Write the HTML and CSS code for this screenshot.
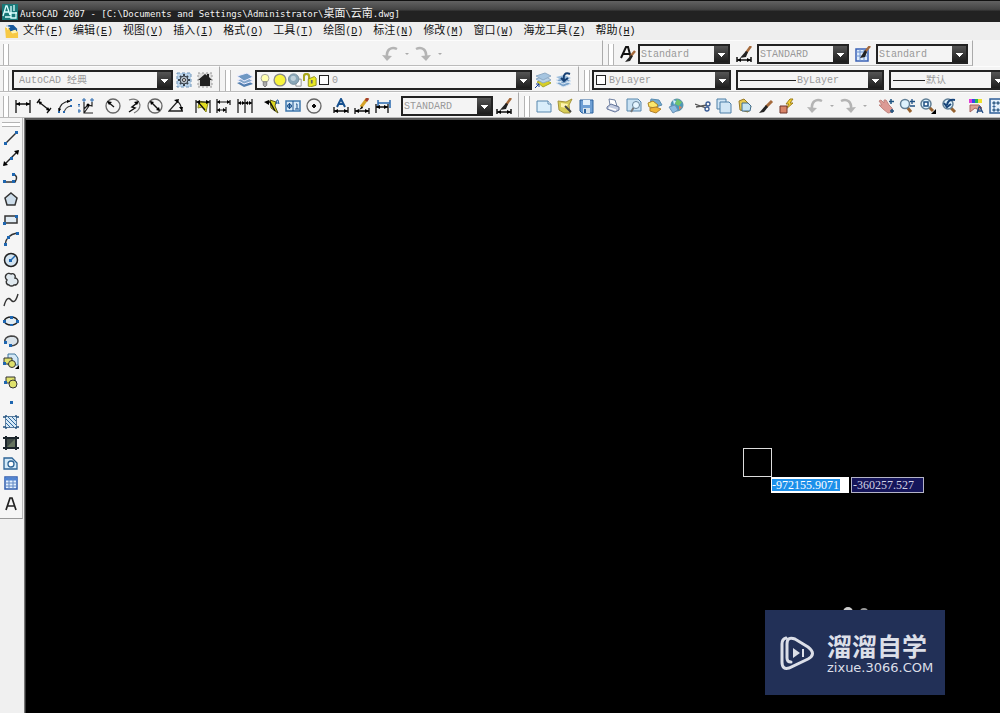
FILE: index.html
```html
<!DOCTYPE html>
<html lang="zh-CN">
<head>
    <meta charset="UTF-8">
    <meta name="viewport" content="width=device-width, initial-scale=1.0">
    <title>AutoCAD 2007</title>
    <link rel="stylesheet" href="styles.css">
</head>
<body>

    <header class="titlebar">
        <svg class="app-icon" viewBox="0 0 16 16"><rect width="16" height="16" fill="#187878"/><path d="M1 12L4 2h1l3 9M2 8h5M9 2v9M12 1v6M8 9h7M9 9v5h5V8M3 13h6" fill="none" stroke="#dff" stroke-width="1.3"/></svg>
        <span>AutoCAD 2007 - [C:\Documents and Settings\Administrator\<b>桌面</b>\<b>云南</b>.dwg]</span>
    </header>

    <nav class="menubar">
        <svg class="doc-icon" viewBox="0 0 16 16"><path d="M3 1h7l4 4v7H3z" fill="#17589c"/><path d="M1 3l4 1 2 4 5-2 3 3v6H2z" fill="#f7c944"/><path d="M7 8l5-2 2 3-5 1z" fill="#fff3b0"/><path d="M4 1v5M1.500 3.500h5" stroke="#fff"/></svg>
        <button>文件<span>(<u>F</u>)</span></button>
        <button>编辑<span>(<u>E</u>)</span></button>
        <button>视图<span>(<u>V</u>)</span></button>
        <button>插入<span>(<u>I</u>)</span></button>
        <button>格式<span>(<u>O</u>)</span></button>
        <button>工具<span>(<u>T</u>)</span></button>
        <button>绘图<span>(<u>D</u>)</span></button>
        <button>标注<span>(<u>N</u>)</span></button>
        <button>修改<span>(<u>M</u>)</span></button>
        <button>窗口<span>(<u>W</u>)</span></button>
        <button>海龙工具<span>(<u>Z</u>)</span></button>
        <button>帮助<span>(<u>H</u>)</span></button>
    </nav>

    <!-- undo / styles -->
    <div class="row row-styles">
        <div class="toolbar undo-bar">
            <i class="grip"></i>
            <button class="tool wide push" aria-label="放弃"><svg viewBox="0 0 16 16"><path d="M15 3C9 0 4 4 5 11" fill="none" stroke="#b4b4b4" stroke-width="2.500"/><path d="M0 9l10 1-5 5z" fill="#b4b4b4"/></svg></button>
            <button class="more" aria-label="放弃列表"></button>
            <button class="tool wide" aria-label="重做"><svg viewBox="0 0 16 16"><path d="M1 3c6-3 11 1 10 8" fill="none" stroke="#b4b4b4" stroke-width="2.500"/><path d="M16 9L6 10l5 5z" fill="#b4b4b4"/></svg></button>
            <button class="more" aria-label="重做列表"></button>
        </div>
        <div class="toolbar">
            <i class="grip"></i>
            <button class="tool" aria-label="文字样式"><svg viewBox="0 0 16 16"><path d="M1 12L6 1h2l3 11M3 8h7" fill="none" stroke="#111" stroke-width="2"/><path d="M15 5l-5 6" stroke="#a56a3c" stroke-width="2.500"/><path d="M11 9l2 1-3 5-5 1z" fill="#222"/></svg></button>
            <label class="combo small"><select aria-label="文字样式"><option>Standard</option></select></label>
            <button class="tool style" aria-label="标注样式"><svg viewBox="0 0 16 16"><path d="M15 0l-5 7" stroke="#a56a3c" stroke-width="2.500"/><path d="M10 5l2 1-2 5-6 1z" fill="#222"/><path d="M1 11v5M15 11v5M1 14h14" stroke="#111" stroke-width="1.500"/><path d="M1 14l4-2v4zM15 14l-4-2v4z"/></svg></button>
            <label class="combo small"><select aria-label="标注样式"><option>STANDARD</option></select></label>
            <button class="tool style" aria-label="表格样式"><svg viewBox="0 0 16 16"><path d="M1 3h12v12H1z" fill="#dcebfa" stroke="#3b62b5" stroke-width="1.500"/><path d="M1 6h12M1 10h12M5 3v12M9 3v12" stroke="#6c92d2"/><path d="M15 0l-5 6" stroke="#a56a3c" stroke-width="2.500"/><path d="M10 4l2 2-2 5-5 1z" fill="#222"/></svg></button>
            <label class="combo small"><select aria-label="表格样式"><option>Standard</option></select></label>
        </div>
    </div>

    <!-- workspace / layers / properties -->
    <div class="row">
        <div class="toolbar">
            <i class="grip"></i>
            <label class="combo workspace"><select aria-label="工作空间"><option>AutoCAD 经典</option></select></label>
            <button class="tool" aria-label="工作空间设置"><svg viewBox="0 0 16 16"><rect x="1" y="1" width="14" height="14" fill="#bcd4ea" stroke="#6f94b8" stroke-dasharray="3 2"/><path d="M8 2v12M2 8h12M4 4l8 8M12 4l-8 8" stroke="#3a444e" stroke-width="2"/><circle cx="8" cy="8" r="4" fill="#b4bec8" stroke="#3a444e"/><circle cx="8" cy="8" r="1.500" fill="#fff" stroke="#333"/></svg></button>
            <button class="tool" aria-label="我的工作空间"><svg viewBox="0 0 16 16"><rect x="1" y="1" width="14" height="14" fill="#ddd" stroke="#999" stroke-dasharray="2 2"/><path d="M1 8l7-6 2 1.500V2h2v3l3 3h-2v6H3V8z" fill="#222"/></svg></button>
        </div>
        <div class="toolbar">
            <i class="grip"></i>
            <button class="tool" aria-label="图层特性管理器"><svg viewBox="0 0 16 16"><path d="M0 11l10-3 6 4-9 3z" fill="#537fb0"/><path d="M0 8l10-3 6 4-9 3z" fill="#86a9cd" stroke="#eef"/><path d="M0 4l10-3 6 4-9 4z" fill="#6f98c3" stroke="#eef"/></svg></button>
            <label class="combo layer">
                <svg viewBox="0 0 16 16"><circle cx="8" cy="6" r="4.500" fill="#ffffb0" stroke="#999"/><path d="M6 10h4v4l-2 2-2-2z" fill="#aaa" stroke="#777"/></svg>
                <svg viewBox="0 0 16 16"><circle cx="8" cy="8" r="7.500" fill="#888"/><circle cx="8" cy="8" r="6" fill="#f8f43c"/></svg>
                <svg viewBox="0 0 16 16"><path d="M9 7h6v8H9z" fill="#fff" stroke="#888"/><circle cx="6.500" cy="7" r="6" fill="#8aa7b8" stroke="#6e8797"/><circle cx="6" cy="6" r="3" fill="#bfd0da"/></svg>
                <svg viewBox="0 0 16 16"><path d="M1 9V4q0-3 3-3t3 3v3" fill="none" stroke="#a8a71c" stroke-width="2.500"/><path d="M6 7l7-3 2 2v8l-7 2-2-1z" fill="#e9e820" stroke="#88871a"/><path d="M10 8v4" stroke="#666" stroke-width="2"/></svg>
                <i class="swatch"></i>
                <select aria-label="图层"><option>0</option></select>
            </label>
            <button class="tool" aria-label="将对象的图层置为当前"><svg viewBox="0 0 16 16"><path d="M2 10l8-3 6 4-8 4z" fill="#d8cf25" stroke="#a5a532"/><path d="M1 7l9-3 6 4-8 3z" fill="#b8d2e8" stroke="#8fabc5"/><path d="M1 4l9-3 6 3-8 4z" fill="#a6c5e0" stroke="#8fabc5"/><path d="M0 16l4-4M1 12h3v3" fill="none" stroke="#123b91"/></svg></button>
            <button class="tool" aria-label="上一个图层"><svg viewBox="0 0 16 16"><path d="M0 11l9-3 6 4-8 3zM0 8l9-3 6 4-8 3z" fill="#79a2ca" stroke="#dce8f4"/><path d="M0 5l8-2 7 3-8 3z" fill="#9cbede"/><path d="M14 2C9 0 7 3 8 8M5 6l3 3 4-3" fill="none" stroke="#153f73" stroke-width="2"/></svg></button>
        </div>
        <div class="toolbar props">
            <i class="grip"></i>
            <label class="combo color"><i class="swatch"></i><select aria-label="颜色"><option>ByLayer</option></select></label>
            <label class="combo linetype"><i class="line"></i><select aria-label="线型"><option>ByLayer</option></select></label>
            <label class="combo lineweight"><i class="line short"></i><select aria-label="线宽"><option>默认</option></select></label>
        </div>
    </div>

    <!-- dimension / standard -->
    <div class="row">
        <div class="toolbar">
            <i class="grip"></i>
            <button class="tool" aria-label="线性"><svg viewBox="0 0 16 16"><path d="M1 2v13M15 2v13M1 6h14" stroke="#111" stroke-width="1.300"/><path d="M1 6l4-2v4zM15 6l-4-2v4z"/></svg></button>
            <button class="tool" aria-label="对齐"><svg viewBox="0 0 16 16"><path d="M4 1L1 5M15 10l-4 5M3 4l10 8" stroke="#111" stroke-width="1.300"/><path d="M2 3l4 1-2 3zM14 13l-4-1 2-3z"/></svg></button>
            <button class="tool" aria-label="弧长"><svg viewBox="0 0 16 16"><path d="M2 13Q3 4 13 3" fill="none" stroke="#222" stroke-width="1.200"/><path d="M7 15Q8 9 14 8" fill="none" stroke="#444" stroke-width="1.200"/><path d="M14 3l-4-1v3zM2 14L1 10l3 1z"/><path d="M6 13h2v2H6zM13 7h2v2h-2zM1 13h2v2H1zM13 1h2v2h-2z" fill="#2868ae"/></svg></button>
            <button class="tool" aria-label="坐标"><svg viewBox="0 0 16 16"><path d="M6 4v11h9M6 11l4-4 4 1V4M6 15l5-7" fill="none" stroke="#222" stroke-width="1.200"/><path d="M0 6l1 1 1-1M1 7v2M5 1h2v2H5zM13 1h2v2h-2zM0 12h2v2H0z" fill="none" stroke="#2868ae"/><circle cx="10" cy="7" r="1.500"/></svg></button>
            <i class="sep"></i>
            <button class="tool" aria-label="半径"><svg viewBox="0 0 16 16"><circle cx="8" cy="8" r="7" fill="none" stroke="#666" stroke-width="1.300"/><path d="M9 9L3 4" stroke="#111" stroke-width="1.300"/><path d="M2 3l5 1-3 3z"/></svg></button>
            <button class="tool" aria-label="折弯"><svg viewBox="0 0 16 16"><path d="M3 2q9-3 11 5 0 5-6 8" fill="none" stroke="#777" stroke-width="1.200"/><path d="M3 14l6-4-3-1 5-4" fill="none" stroke="#111" stroke-width="1.500"/><path d="M13 3L8 4l3 3z"/></svg></button>
            <button class="tool" aria-label="直径"><svg viewBox="0 0 16 16"><circle cx="8" cy="8" r="7" fill="none" stroke="#666" stroke-width="1.300"/><path d="M4 4l8 8" stroke="#111" stroke-width="1.500"/><path d="M3 3l4 1-3 3zM13 13l-4-1 3-3z"/></svg></button>
            <button class="tool" aria-label="角度"><svg viewBox="0 0 16 16"><path d="M10 3l-9 10h14M8 2q5 3 6 11" fill="none" stroke="#222" stroke-width="1.300"/><path d="M6 2l5-1-1 4zM14 13l-3-4h4z"/></svg></button>
            <i class="sep"></i>
            <button class="tool" aria-label="快速标注"><svg viewBox="0 0 16 16"><path d="M4 3l9 2-2 9-4-5-4 1z" fill="#e2dc20" stroke="#8a8920"/><path d="M1 2v13M15 2v13M1 4h14M3 4l7 8" stroke="#111" stroke-width="1.200"/><path d="M1 4l4-2v4zM15 4l-4-2v4z"/></svg></button>
            <button class="tool" aria-label="基线"><svg viewBox="0 0 16 16"><path d="M1 1v14M14 2v5M10 9v6M1 4h13M1 12h9" stroke="#111" stroke-width="1.200"/><path d="M1 4l3-2v4zM14 4l-3-2v4zM1 12l3-2v4zM10 12l-3-2v4z"/></svg></button>
            <button class="tool" aria-label="连续"><svg viewBox="0 0 16 16"><path d="M1 1v14M8 1v14M15 1v14M1 5h14" stroke="#111" stroke-width="1.200"/><path d="M1 5l3-2v4zM8 5L5 3v4zM8 5l3-2v4zM15 5l-3-2v4z"/></svg></button>
            <i class="sep"></i>
            <button class="tool" aria-label="快速引线"><svg viewBox="0 0 16 16"><path d="M6 2l6 2-1 4 3 7-7-5z" fill="#ded820" stroke="#59581d"/><path d="M3 4l3 0 5 9" fill="none" stroke="#111" stroke-width="1.500"/><path d="M0 4l5-2v5z"/><path d="M12 6l1-4h1l1 4M12 5h3" fill="none" stroke="#285f9b"/></svg></button>
            <button class="tool" aria-label="公差"><svg viewBox="0 0 16 16"><path d="M1 3h14v10H1z" fill="#d8e9f8" stroke="#3f78ad" stroke-width="1.500"/><path d="M8 3v10M2 8h5M4.500 5v6M11 6h1v5M10 11h4" fill="none" stroke="#1c538e"/><circle cx="4.500" cy="8" r="2" fill="none" stroke="#1c538e"/></svg></button>
            <button class="tool" aria-label="圆心标记"><svg viewBox="0 0 16 16"><circle cx="8" cy="8" r="7" fill="none" stroke="#666" stroke-width="1.300"/><path d="M8 6v4M6 8h4" stroke="#111" stroke-width="2"/></svg></button>
            <i class="sep"></i>
            <button class="tool" aria-label="编辑标注"><svg viewBox="0 0 16 16"><path d="M4 9l4-8 4 8M5 6h6" fill="none" stroke="#17518f" stroke-width="2"/><path d="M1 9v6M15 9v6M1 13h14" stroke="#111" stroke-width="1.300"/><path d="M1 13l4-2v4zM15 13l-4-2v4z"/></svg></button>
            <button class="tool" aria-label="编辑标注文字"><svg viewBox="0 0 16 16"><path d="M13 1L7 9" stroke="#d6a328" stroke-width="3"/><path d="M8 8l-3 4 4-2z"/><path d="M14 0l-2 3" stroke="#a53f2c" stroke-width="3"/><path d="M1 10v6M15 10v6M1 13h14" stroke="#111" stroke-width="1.300"/><path d="M1 13l4-2v4zM15 13l-4-2v4z"/></svg></button>
            <button class="tool" aria-label="标注更新"><svg viewBox="0 0 16 16"><path d="M3 2v8M15 2v8M3 5h12" stroke="#2868ae" stroke-width="1.500"/><path d="M1 6v9M13 6v9M1 9h12" stroke="#111" stroke-width="1.300"/><path d="M1 9l4-2v4zM13 9L9 7v4z"/></svg></button>
            <label class="combo small dim"><select aria-label="标注样式控制"><option>STANDARD</option></select></label>
            <button class="tool" aria-label="标注样式"><svg viewBox="0 0 16 16"><path d="M15 0l-5 7" stroke="#a56a3c" stroke-width="2.500"/><path d="M10 5l2 1-2 5-6 1z" fill="#222"/><path d="M1 11v5M15 11v5M1 14h14" stroke="#111" stroke-width="1.500"/><path d="M1 14l4-2v4zM15 14l-4-2v4z"/></svg></button>
        </div>
        <div class="toolbar standard">
            <i class="grip"></i>
            <button class="tool" aria-label="新建"><svg viewBox="0 0 16 16"><path d="M1 3h11l3 3v8H1z" fill="#d9eefb" stroke="#5686ad"/><path d="M12 3v3h3" fill="#fff" stroke="#5686ad"/></svg></button>
            <button class="tool" aria-label="打开"><svg viewBox="0 0 16 16"><path d="M1 3l8 1 6-3-3 6 1 8H7L2 12z" fill="#d7cd57" stroke="#a5953c"/><path d="M4 5l7 1-2 4-5-1z" fill="#fff5b0"/><path d="M8 8l6 6" stroke="#444" stroke-width="2"/></svg></button>
            <button class="tool" aria-label="保存"><svg viewBox="0 0 16 16"><path d="M2 2h13v13H4l-2-2z" fill="#6e9fd4" stroke="#2b619c"/><path d="M5 2h7v5H5z" fill="#e2f0fb"/><path d="M5 10h7v5H5z" fill="#d7e4ed"/><path d="M6 11h2v4H6z" fill="#2b619c"/></svg></button>
            <i class="sep"></i>
            <button class="tool" aria-label="打印"><svg viewBox="0 0 16 16"><path d="M4 1l6 1 2 6-7-1z" fill="#fff" stroke="#7182a1"/><path d="M2 9l4-3 8 3v3l-4 2-8-3z" fill="#c3cce0" stroke="#66769b"/><path d="M4 10l7 2" stroke="#fff" stroke-width="1.500"/></svg></button>
            <button class="tool" aria-label="打印预览"><svg viewBox="0 0 16 16"><path d="M1 1h11l3 3v9H1z" fill="#c9e2f3" stroke="#5686ad"/><path d="M8 9l-3 5" stroke="#777" stroke-width="2"/><circle cx="10" cy="7" r="3.500" fill="#e6f6ff" stroke="#65839b"/></svg></button>
            <button class="tool" aria-label="发布"><svg viewBox="0 0 16 16"><path d="M4 1l8 1 3 5-6 2-6-2z" fill="#74a9cf" stroke="#5a8cb0"/><path d="M1 5l5-2 5 4-2 3-7-1z" fill="#fbe76c" stroke="#ad8325"/><path d="M3 10l6-1 5 2-5 4-6-2z" fill="#f0b432" stroke="#b0812c"/></svg></button>
            <button class="tool" aria-label="三维 DWF"><svg viewBox="0 0 16 16"><circle cx="9" cy="7" r="6" fill="#4899bd" stroke="#5a8fa6"/><path d="M9 1l5 3-3 4-4-2z" fill="#72c46d"/><path d="M5 2l3 1-2 4z" fill="#d9f1f8"/><path d="M1 9l6-2 3 5-5 3z" fill="#8bbae0" stroke="#6a92b6"/><path d="M11 8l3 1-3 3z" fill="#e28157"/></svg></button>
            <i class="sep"></i>
            <button class="tool" aria-label="剪切"><svg viewBox="0 0 16 16"><path d="M0 6l11 4M1 9l11-2" stroke="#555" stroke-width="1.300"/><circle cx="13" cy="6" r="2" fill="none" stroke="#385b95" stroke-width="1.300"/><circle cx="12" cy="11" r="2" fill="none" stroke="#385b95" stroke-width="1.300"/></svg></button>
            <button class="tool" aria-label="复制"><svg viewBox="0 0 16 16"><path d="M1 1h9v10H1z" fill="#d1e6f5" stroke="#4d7fa7"/><path d="M4 4h9l2 2v9H4z" fill="#d1e6f5" stroke="#4d7fa7"/></svg></button>
            <button class="tool" aria-label="粘贴"><svg viewBox="0 0 16 16"><path d="M2 3l5-2 7 7-3 6-8-2z" fill="#e8ca50" stroke="#9a7a25"/><path d="M5 5h6l3 3-1 5H5z" fill="#c5e4f4" stroke="#416d8e"/></svg></button>
            <button class="tool" aria-label="特性匹配"><svg viewBox="0 0 16 16"><path d="M14 3l-6 6" stroke="#a56a3c" stroke-width="3"/><path d="M8 7l2 2-4 5-5 1z" fill="#222"/></svg></button>
            <button class="tool" aria-label="块编辑器"><svg viewBox="0 0 16 16"><path d="M11 1l-4 5h3L6 12l8-7h-3l3-4z" fill="#f9d431" stroke="#9b7c1a"/><path d="M1 8h7v7H1z" fill="#d88468" stroke="#71342a"/></svg></button>
            <i class="sep"></i>
            <button class="tool wide" aria-label="放弃"><svg viewBox="0 0 16 16"><path d="M15 3C9 0 4 4 5 11" fill="none" stroke="#b4b4b4" stroke-width="2.500"/><path d="M0 9l10 1-5 5z" fill="#b4b4b4"/></svg></button>
            <button class="more" aria-label="放弃列表"></button>
            <button class="tool wide" aria-label="重做"><svg viewBox="0 0 16 16"><path d="M1 3c6-3 11 1 10 8" fill="none" stroke="#b4b4b4" stroke-width="2.500"/><path d="M16 9L6 10l5 5z" fill="#b4b4b4"/></svg></button>
            <button class="more" aria-label="重做列表"></button>
            <i class="sep"></i>
            <button class="tool" aria-label="实时平移"><svg viewBox="0 0 16 16"><path d="M1 3l2-1 3 3V2l2 0 3 5 3 3 1 4-5 1-5-4-4-4 3 0z" fill="#dc9a94" stroke="#c08680"/><path d="M13 1v5M11 3.500h5M14 11v4M12 13h4" stroke="#1e5380" stroke-width="1.500"/></svg></button>
            <button class="tool" aria-label="实时缩放"><svg viewBox="0 0 16 16"><path d="M8 9l4 5" stroke="#966230" stroke-width="3"/><circle cx="6" cy="6" r="4.500" fill="#ddf2fd" stroke="#617f96" stroke-width="1.500"/><path d="M13 1v5M11 3.500h5M11 8h5" stroke="#1e4f83" stroke-width="1.300"/></svg></button>
            <button class="tool" aria-label="窗口缩放"><svg viewBox="0 0 16 16"><path d="M9 9l4 4" stroke="#966230" stroke-width="3"/><circle cx="6" cy="6" r="5" fill="#ddf2fd" stroke="#617f96" stroke-width="1.500"/><path d="M4 4h4v4H4z" fill="#fff" stroke="#1e4f83" stroke-width="1.500"/><path d="M16 11v5h-5z"/></svg></button>
            <button class="tool" aria-label="缩放上一个"><svg viewBox="0 0 16 16"><path d="M9 9l5 5" stroke="#966230" stroke-width="3"/><circle cx="7" cy="6" r="5" fill="#ddf2fd" stroke="#617f96" stroke-width="1.500"/><path d="M14 2Q7 1 6 7M3 5l3 4 4-3" fill="none" stroke="#164379" stroke-width="2"/></svg></button>
            <i class="sep"></i>
            <button class="tool" aria-label="特性"><svg viewBox="0 0 16 16"><path d="M1 1h3v4H1z" fill="#e339d7"/><path d="M4 1h3v4H4z" fill="#3849ec"/><path d="M7 1h3v4H7z" fill="#26bb55"/><path d="M10 1h4v4h-4z" fill="#eee12c"/><path d="M2 7h9l3 3-3 2-4-2-5 4z" fill="#dba092" stroke="#a8655e"/><path d="M9 15l2-6h1l3 6M10 13h4" fill="none" stroke="#244d83" stroke-width="1.300"/></svg></button>
            <button class="tool" aria-label="设计中心"><svg viewBox="0 0 16 16"><path d="M1 1h14v14H1z" fill="#e5f1fa" stroke="#315f98" stroke-width="1.500"/><path d="M4 4h2v2H4zM4 8h2v1H4zM4 11h2v2H4zM8 4h2v2H8zM8 11h2v2H8z" fill="#6f8b5c" stroke="#315f98"/></svg></button>
        </div>
    </div>

    <main class="workspace-area">
        <aside class="side">
            <div class="draw">
                <i class="grip-h"></i>
                <div class="group">
                    <button class="tool" aria-label="直线"><svg viewBox="0 0 16 16"><path d="M2 14L14 2" stroke="#333" stroke-width="1.500"/><path d="M1 12h3v3H1zM12 1h3v3h-3z" fill="#1e66b0"/></svg></button>
                    <button class="tool" aria-label="构造线"><svg viewBox="0 0 16 16"><path d="M1 15L15 1" stroke="#222" stroke-width="1.500"/><path d="M0 16l1-5 4 4zM16 0l-5 1 4 4z"/><path d="M7 7h3v3H7z" fill="#1e66b0"/></svg></button>
                    <button class="tool" aria-label="多段线"><svg viewBox="0 0 16 16"><path d="M2 12h10q4-6-2-8" fill="none" stroke="#333" stroke-width="1.500"/><path d="M0 10h3v3H0zM9 10h3v3H9zM9 3h3v3H9z" fill="#1e66b0"/></svg></button>
                </div>
                <div class="group">
                    <button class="tool" aria-label="正多边形"><svg viewBox="0 0 16 16"><path d="M8 2l6 5-2 7H4L2 7z" fill="#cdddea" stroke="#333" stroke-width="1.500"/></svg></button>
                    <button class="tool" aria-label="矩形"><svg viewBox="0 0 16 16"><path d="M2 5h12v7H2z" fill="#e0ebf3" stroke="#333" stroke-width="1.500"/><path d="M0 11h3v3H0zM12 4h3v3h-3z" fill="#1e66b0"/></svg></button>
                    <button class="tool" aria-label="圆弧"><svg viewBox="0 0 16 16"><path d="M2 14Q3 4 14 2" fill="none" stroke="#333" stroke-width="1.500"/><path d="M1 12h3v3H1zM4 5h3v3H4zM13 1h3v3h-3z" fill="#1e66b0"/></svg></button>
                </div>
                <div class="group">
                    <button class="tool" aria-label="圆"><svg viewBox="0 0 16 16"><circle cx="8" cy="8" r="6.500" fill="#d3e4f1" stroke="#222" stroke-width="1.500"/><path d="M8 8l4-4" stroke="#1e66b0" stroke-width="1.500"/><path d="M6 7h3v3H6z" fill="#1e66b0"/></svg></button>
                    <button class="tool" aria-label="修订云线"><svg viewBox="0 0 16 16"><path d="M4 8a3.500 3.500 0 1 1 4-6 3 3 0 0 1 4 4 3.500 3.500 0 1 1-1 7 3.500 3.500 0 0 1-5 0 3 3 0 0 1-2-5z" fill="#e0e9ef" stroke="#333" stroke-width="1.400"/></svg></button>
                    <button class="tool" aria-label="样条曲线"><svg viewBox="0 0 16 16"><path d="M1 14Q4 3 8 8t7-6" fill="none" stroke="#333" stroke-width="1.400"/></svg></button>
                </div>
                <div class="group">
                    <button class="tool" aria-label="椭圆"><svg viewBox="0 0 16 16"><ellipse cx="8" cy="8" rx="6.500" ry="4" fill="#e2edf4" stroke="#222" stroke-width="1.500"/><path d="M0 7h3v3H0zM13 7h3v3h-3zM7 3h3v3H7zM7 11h3v2H7z" fill="#1e66b0"/></svg></button>
                    <button class="tool" aria-label="椭圆弧"><svg viewBox="0 0 16 16"><path d="M2 9q-1-5 6-6 7 0 7 5 0 4-7 5" fill="#d9e3ea" stroke="#444" stroke-width="1.500"/><path d="M1 8h3v3H1zM6 11h3v3H6z" fill="#1e66b0"/></svg></button>
                    <button class="tool" aria-label="插入块"><svg viewBox="0 0 16 16"><path d="M5 1h7l3 4v7H5z" fill="#d3e8f6" stroke="#40779c"/><path d="M1 5h8v6H1z" fill="#dfe16c" stroke="#333"/><circle cx="9" cy="11" r="3.500" fill="#dfe16c" stroke="#333"/><path d="M16 12v4h-4z"/><path d="M0 9h3v3H0z" fill="#1e66b0"/></svg></button>
                </div>
                <div class="group">
                    <button class="tool" aria-label="创建块"><svg viewBox="0 0 16 16"><path d="M3 3h9v6H3z" fill="#dfe16c" stroke="#333"/><circle cx="10" cy="10" r="4" fill="#dfe16c" stroke="#333"/><path d="M1 7h3v3H1z" fill="#1e66b0"/></svg></button>
                    <button class="tool" aria-label="点"><svg viewBox="0 0 16 16"><path d="M7 7h3v3H7z" fill="#1e66b0"/></svg></button>
                    <button class="tool" aria-label="图案填充"><svg viewBox="0 0 16 16"><path d="M3 1v14M13 1v14M0 3h16M0 13h16" stroke="#22527f" stroke-width="1.400"/><path d="M3 3h10v10H3z" fill="#d7e8f5"/><path d="M3 9l4 4M3 5l8 8M5 3l8 8M9 3l4 4" stroke="#2b689e"/></svg></button>
                </div>
                <div class="group">
                    <button class="tool" aria-label="渐变色"><svg viewBox="0 0 16 16"><path d="M3 3h10v10H3z" fill="#66745f"/><path d="M3 3h10L3 13z" fill="#404b46"/><path d="M3 1v14M13 1v14M0 3h16M0 13h16" stroke="#1c252b" stroke-width="2"/></svg></button>
                    <button class="tool" aria-label="面域"><svg viewBox="0 0 16 16"><path d="M1 3h8l5 5v6H1z" fill="#d4eaf9" stroke="#2b6395" stroke-width="1.300"/><circle cx="8" cy="9" r="3" fill="#fff" stroke="#2b6395" stroke-width="1.300"/></svg></button>
                    <button class="tool" aria-label="表格"><svg viewBox="0 0 16 16"><path d="M2 2h12v12H2z" fill="#e5f1ff" stroke="#315cad" stroke-width="1.500"/><path d="M2 4h12" stroke="#4d83d5" stroke-width="3"/><path d="M2 8h12M2 11h12M6 3v11M10 3v11" stroke="#6088c4"/></svg></button>
                </div>
                <div class="group">
                    <button class="tool" aria-label="多行文字"><svg viewBox="0 0 16 16"><path d="M3 14L7 2h2l4 12M5 10h6" fill="none" stroke="#222" stroke-width="1.700"/></svg></button>
                </div>
            </div>
        </aside>

        <section class="canvas">
            <div class="pickbox"></div>
            <div class="coords">
                <input class="x" type="text" value="-972155.9071" aria-label="X">
                <input class="y" type="text" value="-360257.527" aria-label="Y">
            </div>
            <i class="bump big"></i>
            <i class="bump"></i>
            <div class="brand">
                <svg viewBox="0 0 34 36"><path d="M6 3Q2 4 2 9v18q0 8 7 6l19-9q9-5 0-12L15 4Q7 1 7 9v14q0 4 4 4" fill="none" stroke="#dcdfe8" stroke-width="3" stroke-linecap="round"/><path d="M13 13l7 5-7 5z" fill="#dcdfe8"/><path d="M23 14v8" stroke="#dcdfe8" stroke-width="2"/></svg>
                <div class="brand-text">
                    <strong>溜溜自学</strong>
                    <span>zixue.3066.COM</span>
                </div>
            </div>
        </section>
    </main>

</body>
</html>
```
FILE: styles.css
```css
* {
    box-sizing: border-box;
}
body {
    margin: 0;
    min-height: 100vh;
    display: flex;
    flex-direction: column;
    overflow: hidden;
    background-color: #f0f0f0;
    color: #111;
    font-family: "Liberation Mono", "Noto Sans CJK SC", monospace;
    font-size: 10px;
}
button {
    border: none;
    padding: 0;
    background: none;
    color: inherit;
    font-family: inherit;
}
.titlebar {
    display: flex;
    align-items: center;
    gap: 2px;
    height: 22px;
    padding-left: 2px;
    border-top: 1px solid #111;
    background: linear-gradient(#626262, #444 40%, #222 50%, #222);
    color: #f4f4f4;
    font-family: "DejaVu Sans Mono", "Noto Sans CJK SC", monospace;
    font-size: 9px;
    white-space: nowrap;
}
.titlebar b {
    font-family: "Noto Sans CJK SC", sans-serif;
    font-size: 11px;
    font-weight: normal;
}
.app-icon {
    width: 16px;
    height: 16px;
}
.menubar {
    display: flex;
    align-items: center;
    gap: 10px;
    height: 18px;
    padding-left: 4px;
    background-color: #eee;
}
.menubar button {
    font-size: 11px;
    line-height: 16px;
    white-space: nowrap;
}
.menubar button span {
    font-size: 10px;
}
.doc-icon {
    width: 15px;
    height: 15px;
    margin-right: -6px;
}

/* toolbars */
.row {
    display: flex;
    height: 26px;
    background-color: #f4f4f4;
}
.row-styles {
    padding-right: 27px;
}
.toolbar {
    display: flex;
    flex-shrink: 0;
    align-items: center;
    padding: 2px 4px 0 3px;
    border-right: 1px solid #aaa;
    border-bottom: 1px solid #bbb;
    border-top: 1px solid #fcfcfc;
}
.toolbar + .toolbar {
    padding-left: 5px;
}
.undo-bar {
    flex: 1;
    padding-right: 158px;
}
.push {
    margin-left: auto;
}
.props,
.standard {
    border-right: none;
}
.grip {
    width: 6px;
    height: 21px;
    margin-right: 3px;
    border: solid #b4b4b4;
    border-width: 0 1px;
    background-color: #fff;
    flex-shrink: 0;
}
.sep {
    width: 6px;
    flex-shrink: 0;
}
.tool {
    display: flex;
    align-items: center;
    justify-content: center;
    flex-shrink: 0;
    width: 21px;
    height: 20px;
}
.tool svg {
    width: 16px;
    height: 16px;
}
.tool.style {
    width: 27px;
}
.tool.wide {
    width: 24px;
}
.more {
    width: 9px;
    height: 20px;
    flex-shrink: 0;
}
.more::after {
    content: "";
    display: block;
    width: 0;
    margin: auto;
    border: 2px solid transparent;
    border-top-color: #aaa;
    border-bottom: none;
}
.combo {
    display: flex;
    align-items: center;
    flex-shrink: 0;
    height: 20px;
    border: 2px solid #222;
    background-color: #f4f4f4;
}
.combo::after {
    content: "";
    width: 14px;
    height: 16px;
    background:
        linear-gradient(#fff, #fff) 4px 7px / 7px 1px no-repeat,
        linear-gradient(#fff, #fff) 5px 8px / 5px 1px no-repeat,
        linear-gradient(#fff, #fff) 6px 9px / 3px 1px no-repeat,
        linear-gradient(#fff, #fff) 7px 10px / 1px 1px no-repeat,
        linear-gradient(#555, #1c1c1c);
}
.combo select {
    flex: 1;
    min-width: 0;
    height: 16px;
    padding: 0 0 0 1px;
    border: none;
    appearance: none;
    background: none;
    color: #999;
    font-family: inherit;
    font-size: 10px;
}
.combo svg {
    width: 14px;
    height: 14px;
    margin-left: 1px;
}
.small {
    width: 92px;
}
.dim {
    margin-left: 8px;
}
.workspace {
    width: 161px;
}
.workspace select {
    padding-left: 5px;
    font-size: 10px;
}
.layer {
    width: 277px;
}
.color {
    width: 139px;
}
.linetype {
    width: 148px;
}
.lineweight {
    width: 118px;
}
.props {
    gap: 5px;
}
.props .grip {
    margin-right: -3px;
}
.swatch {
    width: 10px;
    height: 10px;
    margin: 0 2px;
    border: 1px solid #222;
    background-color: #fff;
    flex-shrink: 0;
}
.line {
    width: 56px;
    height: 1px;
    margin-left: 2px;
    background-color: #222;
}
.line.short {
    width: 32px;
}

/* drawing area */
.workspace-area {
    flex: 1;
    display: flex;
}
.side {
    width: 25px;
    border-right: 1px solid #777;
}
.draw {
    display: flex;
    flex-direction: column;
    gap: 1px;
    width: 23px;
    padding: 4px 0 4px;
    border-right: 1px solid #bbb;
    border-bottom: 1px solid #999;
    background-color: #f5f5f5;
}
.grip-h {
    width: 18px;
    height: 5px;
    margin-left: 2px;
    border: solid #b4b4b4;
    border-width: 1px 0;
    background-color: #fff;
}
.canvas {
    position: relative;
    flex: 1;
    overflow: hidden;
    border-top: 2px solid #555;
    border-left: 1px solid #333;
    background-color: #000;
}
.pickbox {
    position: absolute;
    left: 717px;
    top: 328px;
    width: 29px;
    height: 29px;
    border: 1px solid #ddd;
}
.coords {
    position: absolute;
    left: 745px;
    top: 357px;
    display: flex;
    gap: 2px;
}
.coords input {
    height: 16px;
    padding: 0;
    font-family: "Liberation Serif", serif;
    font-size: 12px;
    color: #fff;
}
.coords .x {
    width: 78px;
    border: 1px solid #fff;
    background: linear-gradient(#1c90ea, #1c90ea) 0 1px / 68px 12px no-repeat #fff;
}
.coords .y {
    width: 73px;
    padding-left: 1px;
    border: 1px solid #b4b4c8;
    background-color: #15155a;
    color: #d0d0e4;
}
.brand {
    position: absolute;
    left: 739px;
    top: 490px;
    display: flex;
    align-items: center;
    gap: 13px;
    width: 180px;
    height: 85px;
    padding-left: 15px;
    background-color: #223057;
    color: #dcdfe8;
}
.brand > svg {
    width: 34px;
    height: 36px;
}
.brand-text {
    display: flex;
    flex-direction: column;
    gap: 3px;
}
.brand strong {
    font-family: "Noto Sans CJK SC", sans-serif;
    font-size: 25px;
    font-weight: 700;
    line-height: 26px;
}
.brand span {
    font-family: "DejaVu Sans", sans-serif;
    font-size: 13px;
    line-height: 13px;
}
.bump {
    position: absolute;
    left: 834px;
    top: 488px;
    width: 8px;
    height: 8px;
    border-radius: 50%;
    background-color: #999;
}
.bump.big {
    left: 817px;
    top: 487px;
    width: 10px;
    height: 10px;
    background-color: #ccc;
}
```
